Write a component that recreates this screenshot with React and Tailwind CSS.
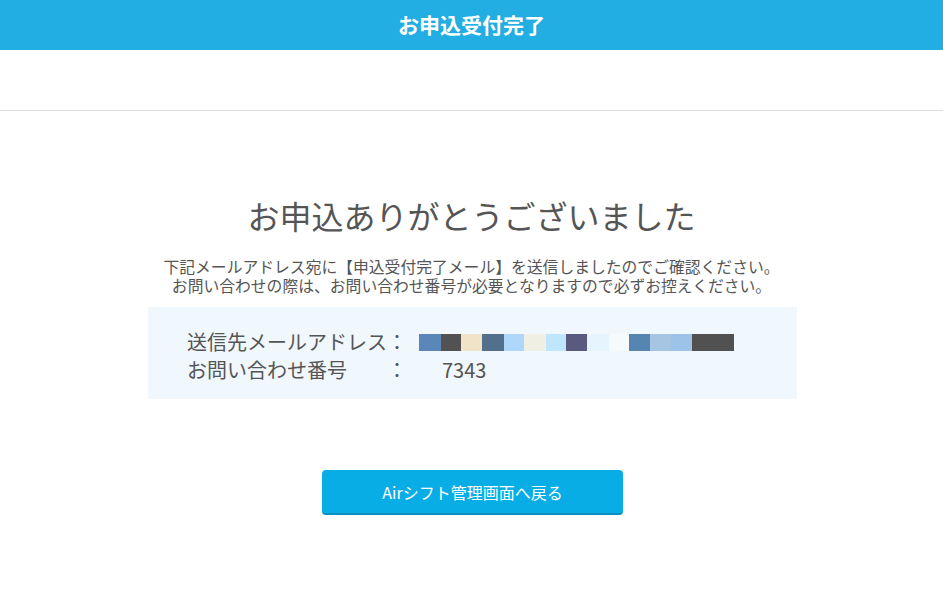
const FONT = {
  fontFamily: '"Noto Sans CJK JP", "Noto Sans", sans-serif',
};

const MOSAIC = [
  ["w-[22px]", "bg-[#5a87b7]"],
  ["w-[20px]", "bg-[#525252]"],
  ["w-[21px]", "bg-[#f1e3c8]"],
  ["w-[22px]", "bg-[#52708b]"],
  ["w-[20px]", "bg-[#afd6fb]"],
  ["w-[22px]", "bg-[#f0efe4]"],
  ["w-[20px]", "bg-[#bfe6fc]"],
  ["w-[21px]", "bg-[#5a5a80]"],
  ["w-[22px]", "bg-[#e6f4fd]"],
  ["w-[20px]", "bg-[#f5fafd]"],
  ["w-[21px]", "bg-[#5685b2]"],
  ["w-[21px]", "bg-[#a5c5e2]"],
  ["w-[21px]", "bg-[#9dc4e8]"],
  ["w-[42px]", "bg-[#515151]"],
];

export default function App() {
  return (
    <div className="min-h-[602px] w-full bg-white text-[#555]" style={FONT}>
      <header className="flex h-[50px] items-center justify-center bg-[#22aee3]">
        <h1 className="text-[21px] font-bold text-white">お申込受付完了</h1>
      </header>
      <div className="h-[61px] border-b border-[#dddddd]" />

      <main className="flex flex-col items-center">
        <h2 className="mt-[80px] text-[32px] leading-[48px] text-[#555]">
          お申込ありがとうございました
        </h2>
        <div className="mt-[18px] flex flex-col items-center text-[15.8px] leading-[19px]">
          <p>
            下記メールアドレス宛に【申込受付完了メール】を送信しましたのでご確認ください。
          </p>
          <p>
            お問い合わせの際は、お問い合わせ番号が必要となりますので必ずお控えください。
          </p>
        </div>

        <div className="ml-[2px] mt-[12px] w-[649px] bg-[#f0f8fd] pb-[15px] pl-[39px] pt-[21px] text-[20px] leading-[28px]">
          <div className="flex items-center">
            <span className="w-[200px]">送信先メールアドレス</span>
            <span className="w-[32px]">：</span>
            <div className="flex h-[17px]">
              {MOSAIC.map(([w, c], i) => (
                <span key={i} className={`${w} ${c} h-full`} />
              ))}
            </div>
          </div>
          <div className="flex items-center">
            <span className="w-[200px]">お問い合わせ番号</span>
            <span className="w-[32px]">：</span>
            <span className="pl-[23px]">7343</span>
          </div>
        </div>

        <button
          type="button"
          className="ml-[2px] mt-[71px] h-[45px] w-[301px] rounded-[4px] border-b-2 border-[#0b8fc0] bg-[#09ade6] text-[16px] text-white"
        >
          Airシフト管理画面へ戻る
        </button>
      </main>
    </div>
  );
}
